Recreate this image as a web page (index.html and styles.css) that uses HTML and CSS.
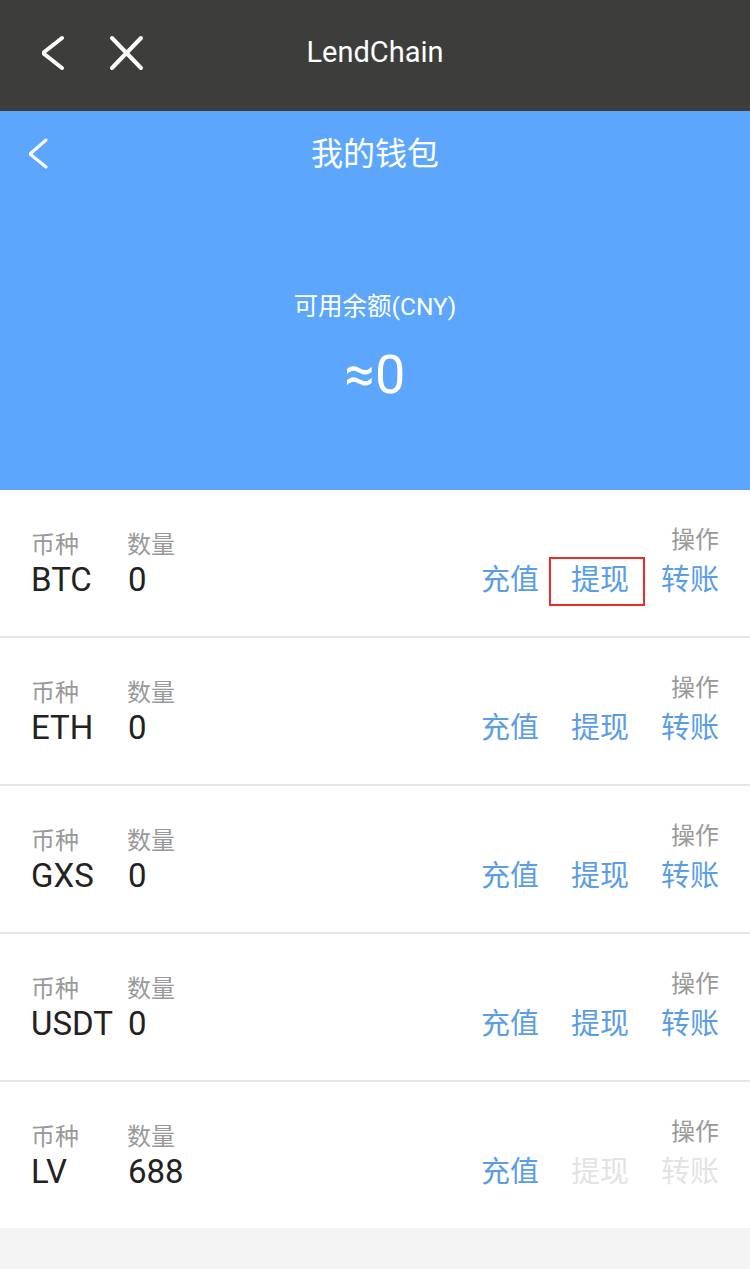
FILE: index.html
```html
<!DOCTYPE html>
<html lang="zh-CN">
<head>
<meta charset="utf-8">
<title>我的钱包</title>
<link rel="stylesheet" href="styles.css">
</head>
<body>
<div class="page">
  <header class="topbar">
    <svg class="tb-back" width="30" height="40" viewBox="0 0 30 40"><polyline points="20,5 1,20 20,35" fill="none" stroke="#fff" stroke-width="4" stroke-linecap="round" stroke-linejoin="round"/></svg>
    <svg class="tb-close" width="36" height="36" viewBox="0 0 36 36"><path d="M3 3 L32 33 M32 3 L3 33" fill="none" stroke="#fff" stroke-width="4" stroke-linecap="round"/></svg>
    <div class="tb-title">LendChain</div>
  </header>

  <section class="hero">
    <div class="hero-nav">
      <svg class="hero-back" width="24" height="34" viewBox="0 0 24 34"><polyline points="17,3 1,17 17,30" fill="none" stroke="#fff" stroke-width="3" stroke-linecap="round" stroke-linejoin="round"/></svg>
      <div class="hero-title">我的钱包</div>
    </div>
    <div class="hero-label">可用余额(CNY)</div>
    <div class="hero-amount">≈0</div>
  </section>

  <ul class="list">
    <li class="row">
      <div class="col-coin"><div class="lbl">币种</div><div class="val">BTC</div></div>
      <div class="col-num"><div class="lbl">数量</div><div class="val">0</div></div>
      <div class="col-op"><div class="lbl op-lbl">操作</div>
        <div class="acts"><span class="act">充值</span><span class="act marked">提现</span><span class="act">转账</span></div></div>
    </li>
    <li class="row">
      <div class="col-coin"><div class="lbl">币种</div><div class="val">ETH</div></div>
      <div class="col-num"><div class="lbl">数量</div><div class="val">0</div></div>
      <div class="col-op"><div class="lbl op-lbl">操作</div>
        <div class="acts"><span class="act">充值</span><span class="act">提现</span><span class="act">转账</span></div></div>
    </li>
    <li class="row">
      <div class="col-coin"><div class="lbl">币种</div><div class="val">GXS</div></div>
      <div class="col-num"><div class="lbl">数量</div><div class="val">0</div></div>
      <div class="col-op"><div class="lbl op-lbl">操作</div>
        <div class="acts"><span class="act">充值</span><span class="act">提现</span><span class="act">转账</span></div></div>
    </li>
    <li class="row">
      <div class="col-coin"><div class="lbl">币种</div><div class="val">USDT</div></div>
      <div class="col-num"><div class="lbl">数量</div><div class="val">0</div></div>
      <div class="col-op"><div class="lbl op-lbl">操作</div>
        <div class="acts"><span class="act">充值</span><span class="act">提现</span><span class="act">转账</span></div></div>
    </li>
    <li class="row last">
      <div class="col-coin"><div class="lbl">币种</div><div class="val">LV</div></div>
      <div class="col-num"><div class="lbl">数量</div><div class="val">688</div></div>
      <div class="col-op"><div class="lbl op-lbl">操作</div>
        <div class="acts"><span class="act">充值</span><span class="act off">提现</span><span class="act off">转账</span></div></div>
    </li>
  </ul>
</div>
</body>
</html>
```

FILE: styles.css
```css
* { box-sizing: border-box; }
html, body { margin: 0; padding: 0; }
body {
  background: #f4f4f4;
  font-family: "Roboto", "Noto Sans CJK SC", sans-serif;
  width: 750px;
  height: 1269px;
  overflow: hidden;
}
.page { display: flex; flex-direction: column; }

.topbar {
  height: 111px;
  background: #3d3d3c;
  display: flex;
  align-items: center;
  position: relative;
  padding-left: 42px;
  padding-bottom: 6px;
}
.tb-back { display: block; }
.tb-close { display: block; margin-left: 37px; }
.tb-title {
  position: absolute;
  left: 0; right: 0; top: 0;
  height: 105px;
  line-height: 105px;
  text-align: center;
  color: #fff;
  font-size: 29px;
  pointer-events: none;
}

.hero {
  height: 379px;
  background: #5ca7fd;
  color: #fff;
  display: flex;
  flex-direction: column;
  align-items: center;
}
.hero-nav {
  align-self: stretch;
  height: 86px;
  display: flex;
  align-items: center;
  position: relative;
  padding-left: 29px;
}
.hero-back { display: block; }
.hero-title {
  position: absolute;
  left: 0; right: 0; top: 0;
  line-height: 86px;
  text-align: center;
  font-size: 32px;
}
.hero-label {
  margin-top: 93px;
  font-size: 24.5px;
  line-height: 34px;
}
.hero-amount {
  margin-top: 21px;
  font-size: 54px;
  line-height: 60px;
}

.list { list-style: none; margin: 0; padding: 0; }
.row {
  background: #fff;
  height: 148px;
  border-bottom: 2px solid #e6e6e6;
  display: flex;
  align-items: flex-start;
  padding: 35px 31px 0 31px;
}
.row.last { border-bottom: none; height: 146px; }
.col-coin { width: 96px; padding-top: 3px; }
.col-num { padding-top: 3px; }
.lbl {
  font-size: 24px;
  line-height: 34px;
  color: #999;
}
.val {
  font-size: 33px;
  line-height: 36px;
  color: #222;
}
.col-num .val { padding-left: 1px; }
.col-op {
  margin-left: auto;
  display: flex;
  flex-direction: column;
  align-items: flex-end;
}
.op-lbl { line-height: 30px; }
.acts {
  display: flex;
  margin-top: 7px;
}
.act {
  font-size: 29px;
  line-height: 36px;
  color: #5a9de4;
  margin-left: 32px;
}
.act:first-child { margin-left: 0; }
.act.off { color: #e3e3e3; }
.act.marked { position: relative; }
.act.marked::after {
  content: "";
  position: absolute;
  left: -22px;
  right: -16px;
  top: -5px;
  bottom: -8px;
  border: 2px solid #ee2a24;
}
```
